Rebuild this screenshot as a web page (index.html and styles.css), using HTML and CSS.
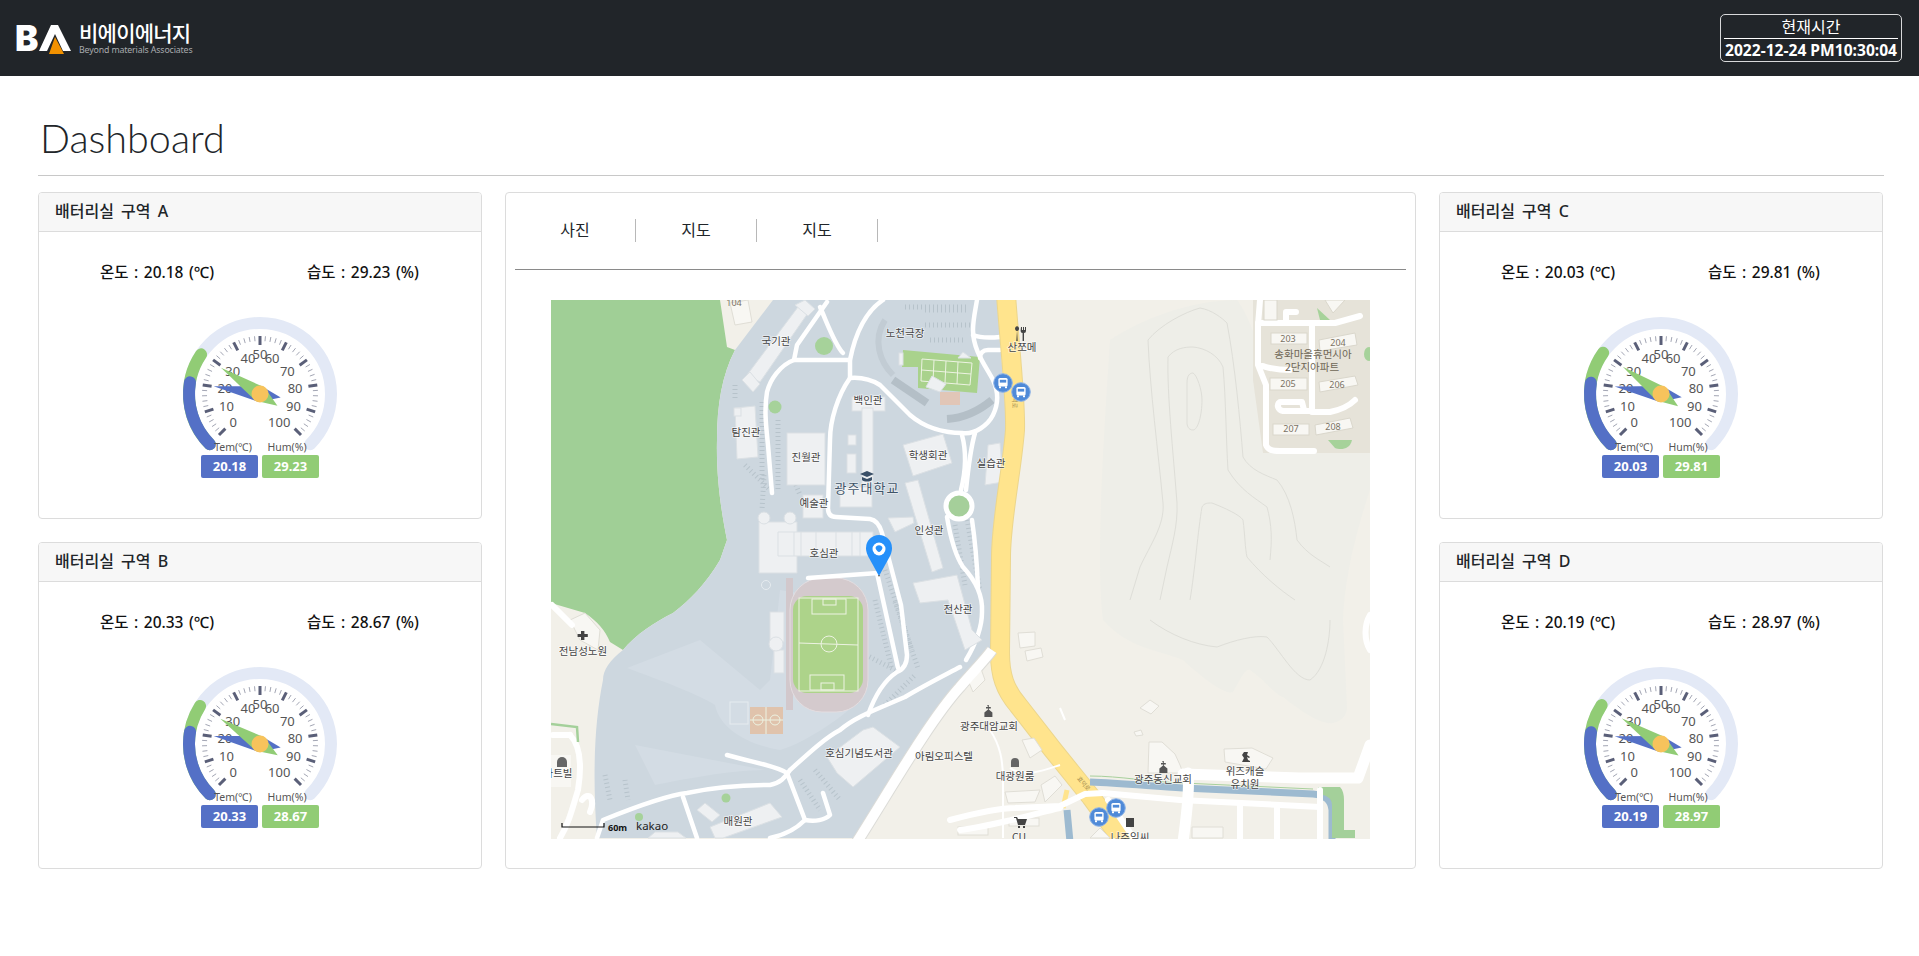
FILE: index.html
```html
<!DOCTYPE html>
<html lang="ko">
<head>
<meta charset="utf-8">
<title>Dashboard</title>
<link rel="stylesheet" href="styles.css">
</head>
<body>
<header class="topbar">
  <div class="logo">
    <div class="logo-mark">
      <span class="logo-b">B</span>
      <svg class="logo-a" viewBox="0 0 32 30" width="32" height="30"><polygon points="0,27 12,1 19,1 32,27 24,27 16,10 8,27" fill="#fff"/><polygon points="16,13 25,30 5,30 10,30" fill="#f29100"/></svg>
    </div>
    <div class="logo-text">
      <div class="logo-kr">비에이에너지</div>
      <div class="logo-en">Beyond materials Associates</div>
    </div>
  </div>
  <div class="clock">
    <div class="clock-title">현재시간</div>
    <div class="clock-time">2022-12-24 PM10:30:04</div>
  </div>
</header>

<main class="page">
  <h1 class="title">Dashboard</h1>
  <div class="board">
    <div class="col">
      <section class="card">
        <div class="card-head">배터리실 구역 A</div>
        <div class="card-body">
          <div class="readout"><span>온도 : 20.18 (℃)</span><span>습도 : 29.23 (%)</span></div>
          <div class="gauge" data-t="20.18" data-h="29.23"></div>
          <div class="badges"><span class="badge blue">20.18</span><span class="badge green">29.23</span></div>
        </div>
      </section>
      <section class="card">
        <div class="card-head">배터리실 구역 B</div>
        <div class="card-body">
          <div class="readout"><span>온도 : 20.33 (℃)</span><span>습도 : 28.67 (%)</span></div>
          <div class="gauge" data-t="20.33" data-h="28.67"></div>
          <div class="badges"><span class="badge blue">20.33</span><span class="badge green">28.67</span></div>
        </div>
      </section>
    </div>

    <section class="card center">
      <nav class="tabs"><a class="tab">사진</a><a class="tab">지도</a><a class="tab">지도</a></nav>
      <div class="map-wrap">
        <svg class="map" viewBox="551 300 819 539" width="819" height="539">
          <defs>
            <symbol id="bus" viewBox="-10 -10 20 20" overflow="visible">
              <circle r="9.3" fill="#4f8ad8" stroke="#8fb4e6" stroke-width="1"/>
              <rect x="-4.6" y="-5" width="9.2" height="8.6" rx="1.5" fill="#fff"/>
              <rect x="-3.2" y="-3.2" width="6.4" height="2.8" fill="#4f8ad8"/>
              <rect x="-4" y="3.4" width="2" height="1.8" fill="#fff"/><rect x="2" y="3.4" width="2" height="1.8" fill="#fff"/>
            </symbol>
            <symbol id="church" viewBox="-6 -8 12 16" overflow="visible">
              <path d="M-.8,-7h1.6v2h2v1.4h-2v1.2l3.6,3V5h-8V.6l3.6-3V-3.6h-2V-5h2z" fill="#555"/>
            </symbol>
          </defs>
          <rect class="m-base" x="551" y="300" width="819" height="539"/>

          <!-- hill -->
          <path class="m-hill" d="M1237,300 C1190,300 1140,320 1110,340 C1105,420 1095,560 1103,620 C1130,650 1160,650 1183,660 C1205,680 1225,695 1233,692 C1240,680 1245,668 1250,670 C1265,680 1275,695 1283,697 C1300,710 1320,725 1333,723 C1345,720 1347,712 1347,707 L1343,620 C1345,570 1360,520 1370,490 L1370,453 L1287,453 C1270,400 1260,330 1237,300 Z"/>
          <path class="m-contour" d="M1130,600 L1140,567 C1150,545 1165,525 1163,503 C1158,450 1150,390 1148,340 C1160,325 1185,312 1200,308 C1212,310 1222,318 1227,323 C1235,365 1240,420 1243,457 C1250,470 1265,475 1277,480 C1290,495 1295,520 1297,540 C1308,555 1320,560 1330,567"/>
          <path class="m-contour" d="M1160,600 L1167,567 C1172,545 1178,525 1177,503 C1173,450 1167,395 1168,357 C1175,348 1185,347 1193,347 C1205,348 1218,355 1223,367 C1226,400 1226,440 1228,470 C1240,490 1255,498 1267,507 C1272,525 1272,540 1270,560"/>
          <path class="m-contour" d="M1187,383 C1187,375 1190,373 1193,373 C1197,375 1202,390 1202,400 C1202,415 1198,430 1193,430 C1188,430 1187,425 1187,423 Z"/>
          <path class="m-contour" d="M1190,600 C1195,570 1198,530 1202,507 C1204,503 1208,503 1212,503 C1225,508 1240,515 1243,520 C1245,535 1245,548 1247,557 C1262,575 1280,590 1295,600"/>
          <path class="m-contour" d="M1150,620 C1170,635 1195,645 1217,647 C1235,640 1255,635 1267,637 C1280,650 1295,680 1310,680 C1325,670 1330,640 1330,620"/>

          <!-- forest -->
          <path class="m-green" d="M551,300 H720 L727,347 L735,350 C722,375 717,405 717,440 C716,480 722,515 727,540 L720,560 C705,585 690,600 673,613 C655,622 635,635 623,650 L610,642 C605,630 598,622 585,613 L551,603 Z"/>

          <!-- campus -->
          <path class="m-campus" d="M773,300 L735,350 C722,375 717,405 717,440 C716,480 722,515 727,540 L720,560 C705,585 690,600 673,613 C655,622 635,635 623,650 C610,660 603,670 603,680 C595,720 592,770 597,838 H857 L960,690 L992,650 L992,557 L1007,430 L997,300 Z"/>
          <path class="m-campus2" d="M627,668 C660,680 700,695 715,705 C720,730 750,745 780,750 C800,745 840,720 860,700 L840,600 L780,590 L770,680 L760,690 L700,640 Z M765,770 C730,770 680,780 655,785 L635,745 Z"/>

          <!-- stands and parking -->
          <path class="m-stand" d="M893,380 L927,403"/>
          <path class="m-stand" d="M947,419 C965,418 980,410 992,400"/>
          <path class="m-arc" d="M885,320 C872,340 880,362 893,375"/>
          <path class="m-park" d="M905,307 H968"/><path class="m-park" d="M925,310 H967"/><path class="m-park" d="M925,325 H970"/><path class="m-park" d="M930,340 H963"/>
          <path class="m-park" d="M735,385 V400"/><path class="m-park" d="M762,402 V480"/><path class="m-park" d="M778,420 V490"/><path class="m-park" d="M745,465 L770,490"/>
          <path class="m-park" d="M764,475 L762,510"/><path class="m-park" d="M790,470 L800,495"/><path class="m-park" d="M885,570 L912,650"/><path class="m-park" d="M875,600 L892,670"/><path class="m-park" d="M895,602 L918,668"/><path class="m-park" d="M866,655 L895,670"/>
          <path class="m-park" d="M955,525 L965,585"/><path class="m-park" d="M967,520 L980,590"/>
          <path class="m-park" d="M800,780 L820,810"/><path class="m-park" d="M815,770 L840,800"/><path class="m-park" d="M605,775 L610,800"/><path class="m-park" d="M625,780 L628,800"/>
          <path class="m-park" d="M885,705 L915,675"/>

          <!-- fields -->
          <polygon class="m-field" points="903,350 980,357 977,393 918,388 918,367 902,367"/>
          <g class="m-line"><path d="M922,359 L972,363 L970,385 L921,381 Z M934,360 L933,382 M946,361 L945,383 M958,362 L957,384 M922,370 L971,374"/></g>
          <rect class="m-court" x="940" y="392" width="20" height="13"/>

          <!-- stadium -->
          <rect class="m-lane" x="786" y="578" width="7" height="132"/>
          <rect class="m-track" x="790" y="578" width="78" height="134" rx="32"/>
          <rect class="m-pitch" x="793" y="596" width="70" height="97" rx="14"/>
          <g class="m-line"><rect x="799" y="598" width="59" height="93"/><path d="M799,643 L858,645"/><circle cx="829" cy="644" r="8"/><rect x="812" y="599" width="34" height="15"/><rect x="823" y="599" width="13" height="6"/><rect x="810" y="675" width="34" height="15"/><rect x="821" y="683" width="13" height="7"/></g>
          <rect class="m-court2" x="750" y="707" width="33" height="27"/>
          <g class="m-line"><path d="M766,707 V734 M750,720 H783"/><circle cx="758" cy="720" r="5"/><circle cx="775" cy="720" r="5"/></g>
          <rect class="m-outline" x="730" y="702" width="18" height="22"/>
          <circle class="m-outline" cx="766" cy="585" r="4.500"/>

          <!-- white roads campus -->
          <g class="m-road">
            <path d="M827,302 L797,345 L794,360 C780,365 770,380 767,392 C764,410 766,425 768,445 L772,493"/>
            <path d="M883,300 C865,312 855,335 850,360 L850,378 C838,395 830,420 830,440 L828,508 C828,514 831,517 836,517 L870,519 C877,520 880,526 882,533 L901,605 L907,655 C907,665 902,670 897,672 C885,680 875,695 868,715"/>
            <path d="M877,573 L898,668"/>
            <path d="M808,578 L878,573"/>
            <path d="M794,360 H850"/>
            <path d="M820,307 C828,325 835,345 843,353"/>
            <path d="M850,378 C862,377 872,380 880,385 C890,395 900,405 910,415 C925,428 945,433 962,433 C975,435 988,425 993,415 C998,405 999,393 993,380 C985,365 973,350 973,330 C973,320 975,312 977,300"/>
            <path d="M973,335 C980,338 990,338 1000,337"/>
            <path d="M1000,350 L988,350 C983,350 980,353 980,358"/>
            <path d="M962,435 C966,450 966,470 961,490"/><path d="M975,433 C970,450 968,470 966,490"/>
            <path d="M947,517 C950,535 955,555 963,567 C975,580 983,595 982,612 C982,630 975,645 966,660"/>
            <path d="M972,520 C975,540 977,565 978,587"/>
          </g>
          <circle cx="959" cy="506" r="13" class="m-circle"/>
          <circle class="m-tree" cx="824" cy="346" r="9"/>
          <circle class="m-tree" cx="775" cy="407" r="6.500"/>
          <circle class="m-tree" cx="726" cy="798" r="4.500"/>
          <circle class="m-tree" cx="639" cy="817" r="4"/>

          <g class="m-road">
            <path d="M597,838 L603,820 C640,805 670,795 687,793 C720,786 750,785 770,785 C780,783 785,778 790,770 C810,752 825,738 840,730 C855,717 875,710 905,697 C925,685 945,675 960,667"/>
            <path d="M727,755 C750,762 775,765 787,773 L805,820 C815,822 825,820 830,815 L823,793"/>
            <path d="M805,820 C795,830 785,835 770,838"/>
            <path d="M683,797 L697,838"/>
          </g>

          <!-- buildings campus -->
          <g class="m-bld">
            <polygon points="747,375 798,307 808,313 760,382"/>
            <polygon points="742,380 750,372 760,384 753,392"/>
            <polygon points="795,305 805,300 815,309 808,316"/>
            <polygon points="735,408 755,406 758,457 737,459"/>
            <rect x="734" y="408" width="7" height="8"/>
            <rect x="787" y="433" width="38" height="52"/>
            <rect x="852" y="397" width="33" height="14"/>
            <rect x="862" y="408" width="11" height="76"/>
            <rect x="848" y="435" width="8" height="10"/>
            <rect x="847" y="454" width="9" height="19"/>
            <rect x="840" y="487" width="32" height="20"/>
            <rect x="803" y="495" width="20" height="23"/>
            <polygon points="903,445 943,434 952,463 913,476"/>
            <polygon points="905,483 918,480 943,568 932,572"/>
            <polygon points="888,518 913,517 914,523 895,532"/>
            <polygon points="988,445 1000,443 1003,482 985,485"/>
            <path d="M759,522 H797 V573 H759 Z"/>
            <circle cx="764" cy="518" r="6"/><circle cx="790" cy="518" r="6"/>
            <path d="M778,532 H873 V556 H778 Z"/>
            <path d="M794,532 V556 M801,532 V556 M816,532 V556 M836,532 V556 M852,532 V556 M860,532 V556"/>
            <polygon points="913,583 957,575 972,630 982,640 965,650 948,600 920,603"/>
            <rect x="770" y="612" width="14" height="30"/><rect x="774" y="650" width="10" height="23"/><circle cx="776" cy="644" r="7"/>
            <polygon points="827,757 863,730 873,727 900,747 853,787 837,773"/>
            <polygon points="710,827 770,803 782,817 723,838 715,838"/>
            <polygon points="697,810 705,803 720,815 712,822"/>
            <polygon points="648,838 655,832 678,832 686,838"/>
            <polygon points="926,387 932,376 946,384 940,392"/>
            <polygon points="958,358 963,352 971,358"/>
            <rect x="899" y="353" width="4" height="12"/>
          </g>
          <polygon class="m-bld2" points="730,303 748,300 752,322 735,325"/>

          <!-- yellow road -->
          <path class="m-yellow-b" d="M1006,295 C1010,350 1016,400 1015,430 C1012,470 1001,520 1001,557 L1000,653 C1000,675 1005,690 1018,705 L1053,750 L1091,797 L1126,845"/>
          <path class="m-yellow" d="M1006,295 C1010,350 1016,400 1015,430 C1012,470 1001,520 1001,557 L1000,653 C1000,675 1005,690 1018,705 L1053,750 L1091,797 L1126,845"/>
          <text class="t-road" transform="translate(1013,400) rotate(90)">효덕로</text>
          <text class="t-road" transform="translate(1082,785) rotate(50)">효덕로</text>
          <g class="m-wide"><path d="M857,842 C890,790 930,720 960,687 C970,675 985,660 992,650"/></g>
          <path class="m-yellow-b2" d="M1067,790 L1063,808"/>

          <!-- scattered beige buildings -->
          <g class="m-bld2">
            <polygon points="1018,633 1035,632 1035,646 1020,648"/><polygon points="1025,651 1041,648 1043,657 1027,661"/>
            <polygon points="1140,708 1150,700 1159,706 1151,714"/>
            <polygon points="1134,732 1141,730 1143,735 1136,736"/>
            <polygon points="1149,742 1162,742 1175,754 1180,765 1183,773 1148,773"/>
            <polygon points="1224,749 1252,748 1273,758 1266,769 1225,762"/>
            <polygon points="967,678 980,666 985,680 973,692"/>
            <polygon points="1022,740 1034,738 1042,750 1030,758"/>
            <polygon points="1041,785 1055,776 1062,785 1045,802"/>
            <polygon points="1005,792 1040,790 1035,802 1008,803"/>
            <rect x="1009" y="818" width="30" height="8"/>
            <rect x="958" y="827" width="30" height="8"/>
            <polygon points="600,630 585,613 570,620 580,640 598,650"/>
            <polygon points="1192,827 1223,827 1223,838 1192,838"/>
            <polygon points="1090,838 1100,828 1110,838"/>
          </g>

          <!-- apartments -->
          <path class="m-apt" d="M1253,300 H1370 V453 H1263 L1253,380 Z"/>
          <path class="m-tree" d="M1317,308 L1320,320 H1330 Z"/>
          <path class="m-tree" d="M1328,440 H1352 C1350,450 1340,450 1335,448 Z"/>
          <ellipse class="m-tree" cx="1369" cy="354" rx="5" ry="7"/>
          <g class="m-road thin">
            <path d="M1260,300 L1258,325 V365 L1266,385 V445 C1268,450 1272,451 1280,451 H1314"/>
            <path d="M1258,323 H1335 L1360,316"/>
            <path d="M1286,322 V312 H1296"/>
            <path d="M1312,325 V410"/>
            <path d="M1262,366 C1270,368 1275,370 1290,370"/>
            <path d="M1312,412 H1330 C1340,410 1350,405 1355,400"/>
            <path d="M1312,411 H1283 C1278,410 1276,405 1280,402 H1302 L1304,410"/>
          </g>
          <g class="m-bld3">
            <rect x="1271" y="333" width="36" height="11"/><polygon points="1319,340 1355,333 1357,345 1320,351"/>
            <rect x="1270" y="378" width="37" height="12"/><polygon points="1319,382 1355,376 1358,385 1320,392"/>
            <rect x="1273" y="424" width="36" height="11"/><polygon points="1315,425 1350,418 1353,428 1316,435"/>
            <rect x="1264" y="300" width="13" height="20"/>
            <polygon points="1325,300 1345,300 1333,313"/>
          </g>

          <!-- lower right -->
          <g class="m-water"><path d="M1090,782 C1120,783 1150,786 1183,788 L1313,794 C1325,795 1331,800 1332,810 V842"/><path d="M1067,810 L1070,842"/></g>
          <path class="m-waterline" d="M1090,776 C1120,776 1150,782 1183,783 L1313,789"/>
          <path class="m-greenblock" d="M1318,787 H1340 C1343,790 1344,795 1344,800 V830 H1355 V838 H1332 V805 C1332,797 1325,795 1318,794 Z"/>
          <g class="m-road wide">
            <path d="M1183,774 L1300,778 L1358,778 L1370,745"/>
            <path d="M1188,773 C1190,790 1186,820 1183,842"/>
          </g>
          <g class="m-road mid">
            <path d="M1103,793 L1180,800 L1320,807"/>
            <path d="M950,820 C980,812 1000,808 1015,808 L1060,806 L1085,794 L1103,793"/>
            <path d="M1320,790 V840"/>
            <path d="M1240,805 V840"/><path d="M1277,805 V840"/>
            <path d="M1108,800 L1135,840"/>
          </g>
          <path class="m-thin" d="M990,730 C1000,745 1003,760 1003,780 V838"/>
          <path class="m-thin" d="M1010,768 C1025,778 1045,770 1060,765"/>
          <path class="m-thin" d="M1060,708 L1065,720"/>
          <g class="m-road mid">
            <path d="M552,605 L572,625"/>
            <path d="M570,735 C580,745 582,765 578,790 C572,810 568,825 560,838"/>
            <path d="M553,735 H570"/>
            <path d="M582,800 C590,790 595,800 590,812"/>
            <path d="M960,830 C1000,825 1040,812 1060,808"/>
          </g>
          <path class="m-wide2" d="M857,842 C890,790 930,720 960,687 C970,675 985,660 992,650"/>
          <path class="m-greenline" d="M551,724 L577,727 L578,742"/>
          <rect class="m-bld2a" x="551" y="755" width="20" height="32"/>
          <path class="m-road mid" d="M1370,615 C1364,625 1364,640 1370,650"/>

          <!-- icons -->
          <path class="i-dark" d="M1017,331 a2,2.4 0 1 1 .1,0 l.6,10 h-1.4 z"/>
          <path class="i-dark" d="M1021,327 h1 v3 h1 v-3 h1 v3 h1 v-3 h1 v4 a2,2 0 0 1 -2,2 v8 h-1.4 v-8 a2,2 0 0 1 -2,-2z"/>
          <path class="i-navy" d="M860,474 L867,471 L874,474 L867,477 Z M862,477 L867,479 L872,477 V480 C870,482 864,482 862,480 Z"/>
          <path class="i-dark" d="M581,631 h3.400 v3 h3.400 v3 h-3.400 v3 h-3.400 v-3 h-3.400 v-3 h3.400 z"/>
          <path class="i-gray" d="M557,762 a5,5 0 0 1 10,0 v5 h-10 z"/>
          <path class="i-gray" d="M1011,762 a4,4 0 0 1 8,0 v5 h-8 z"/>
          <use href="#church" x="982" y="704" width="12" height="16"/>
          <use href="#church" x="1157" y="760" width="12" height="16"/>
          <path class="i-dark" d="M1244,752 l4,0 -1,3 3,2 -1,1 -2,-1 1,3 2,1 0,1 h-8 l2,-4 -2,-3 z"/>
          <path class="i-dark" d="M1014,817 h3 l1,2 h9 l-2,6 h-7 l-2,-7 h-2 z M1018,826 h2 v2 h-2 z M1023,826 h2 v2 h-2 z"/>
          <path class="i-dark" d="M1126,818 h8 v9 h-8 z"/>

          <!-- labels -->
          <g class="t-map">
            <text x="776" y="345">국기관</text>
            <text x="905" y="337">노천극장</text>
            <text x="868" y="404">백인관</text>
            <text x="746" y="436">탐진관</text>
            <text x="806" y="461">진월관</text>
            <text x="928" y="459">학생회관</text>
            <text x="991" y="467">실습관</text>
            <text x="814" y="507">예술관</text>
            <text x="929" y="534">인성관</text>
            <text x="824" y="557">호심관</text>
            <text x="958" y="613">전산관</text>
            <text x="583" y="655">전남성노원</text>
            <text x="558" y="777">아트빌</text>
            <text x="859" y="757">호심기념도서관</text>
            <text x="944" y="760">아림오피스텔</text>
            <text x="738" y="825">매원관</text>
            <text x="989" y="730">광주대암교회</text>
            <text x="1015" y="780">대광원룸</text>
            <text x="1163" y="783">광주동신교회</text>
            <text x="1245" y="775">위즈캐슬</text>
            <text x="1245" y="788">유치원</text>
            <text x="1019" y="841">CU</text>
            <text x="1130" y="841">나주임씨</text>
            <text x="1022" y="351">산쪼메</text>
          </g>
          <text class="t-uni" x="867" y="493">광주대학교</text>
          <g class="t-apt">
            <text x="1313" y="358">송화마을휴먼시아</text>
            <text x="1312" y="371">2단지아파트</text>
          </g>
          <g class="t-num">
            <text x="1288" y="342">203</text><text x="1338" y="346">204</text>
            <text x="1288" y="387">205</text><text x="1337" y="388">206</text>
            <text x="1291" y="432">207</text><text x="1333" y="430">208</text>
            <text x="734" y="306">104</text>
          </g>

          <use href="#bus" x="993" y="373" width="20" height="20"/>
          <use href="#bus" x="1011" y="382" width="20" height="20"/>
          <use href="#bus" x="1106" y="798" width="20" height="20"/>
          <use href="#bus" x="1089" y="807" width="20" height="20"/>

          <!-- marker -->
          <path class="i-pin" d="M879,576 L868.500,557 C866,552 866,549 866,548 A13,13 0 0 1 892,548 C892,549 892,552 889.500,557 Z"/>
          <circle cx="879" cy="549" r="6.500" fill="#fff"/>
          <path class="i-pin" d="M875.500,548 A3.600,3.600 0 0 1 882.500,548 C882,550 880,552 879,552 C878,552 876,550 875.500,548 Z"/>
          <path class="i-tip" d="M878,575 h2 l-1,2 z"/>

          <!-- scale -->
          <path class="i-scale" d="M562,823 V827 H604 V823"/>
          <text class="t-scale" x="608" y="831">60m</text>
          <text class="t-kakao" x="636" y="830">kakao</text>
        </svg>
      </div>
    </section>

    <div class="col">
      <section class="card">
        <div class="card-head">배터리실 구역 C</div>
        <div class="card-body">
          <div class="readout"><span>온도 : 20.03 (℃)</span><span>습도 : 29.81 (%)</span></div>
          <div class="gauge" data-t="20.03" data-h="29.81"></div>
          <div class="badges"><span class="badge blue">20.03</span><span class="badge green">29.81</span></div>
        </div>
      </section>
      <section class="card">
        <div class="card-head">배터리실 구역 D</div>
        <div class="card-body">
          <div class="readout"><span>온도 : 20.19 (℃)</span><span>습도 : 28.97 (%)</span></div>
          <div class="gauge" data-t="20.19" data-h="28.97"></div>
          <div class="badges"><span class="badge blue">20.19</span><span class="badge green">28.97</span></div>
        </div>
      </section>
    </div>
  </div>
</main>
<script src="gauge.js"></script>
</body>
</html>
```

FILE: styles.css
```css
* { box-sizing: border-box; }
html, body { margin: 0; padding: 0; }
body {
  font-family: "Noto Sans", "Noto Sans CJK KR", sans-serif;
  color: #212529;
  background: #fff;
  font-size: 14px;
}
.topbar {
  height: 76px;
  background: #212529;
  display: flex;
  align-items: center;
  justify-content: space-between;
  padding: 0 17px 0 15px;
}
.logo { display: flex; align-items: flex-start; gap: 8px; }
.logo-mark { display: flex; align-items: flex-start; height: 30px; margin-top: 2px; }
.logo-b { font: 900 35px/28px "Inter", "Liberation Sans", sans-serif; color: #fff; width: 25px; letter-spacing: -1px; }
.logo-a { display: block; margin-left: -1px; }
.logo-text { display: flex; flex-direction: column; width: 113px; }
.logo-kr { font: 500 21px/21px "Noto Sans CJK KR", sans-serif; color: #fff; letter-spacing: -.75px; white-space: nowrap; }
.logo-en { font: 400 8.800px/10px "Noto Sans", sans-serif; color: #a8abae; white-space: nowrap; margin-top: 2px; letter-spacing: -.15px; }
.clock {
  width: 182px;
  height: 48px;
  border: 1px solid #d8d9da;
  border-radius: 5px;
  color: #fff;
  text-align: center;
  padding: 0 3px;
}
.clock-title { font: 400 16px/22px "Noto Sans CJK KR", sans-serif; border-bottom: 1px solid #fff; height: 24px; }
.clock-time { font: 700 15.600px/22px "Noto Sans", sans-serif; white-space: nowrap; margin: 0 -2px; }

.page { padding: 0 35px 0 38px; }
.title {
  margin: 0;
  padding: 38px 0 0 2px;
  height: 100px;
  font: 300 39.500px/48px "Lato", sans-serif;
  border-bottom: 1px solid #c8c8c8;
  color: #212529;
}
.board {
  display: grid;
  grid-template-columns: 444px 911px 444px;
  column-gap: 23px;
  margin-top: 16px;
  height: 677px;
}
.col { display: flex; flex-direction: column; gap: 23px; }
.card {
  border: 1px solid #dcdcdc;
  border-radius: 4px;
  background: #fff;
  flex: 1;
  overflow: hidden;
}
.card-head {
  height: 39px;
  padding: 0 16px;
  background: #f7f7f7;
  border-bottom: 1px solid #dcdcdc;
  font: 500 16px/37px "Noto Sans", "Noto Sans CJK KR", sans-serif;
  word-spacing: 3px;
  color: #212529;
}
.card-body { display: flex; flex-direction: column; align-items: center; padding-top: 30px; }
.readout {
  display: grid;
  grid-template-columns: 207px 113px;
  width: 320px;
  height: 21px;
  font: 500 15.500px/21px "Noto Sans", "Noto Sans CJK KR", sans-serif;
  word-spacing: 1.500px;
  color: #111;
  white-space: nowrap;
}
.gauge { width: 200px; height: 145px; margin-top: 27px; }
.gauge svg { display: block; }
.badges { display: flex; gap: 4px; }
.badge {
  width: 57px;
  height: 23px;
  border-radius: 2px;
  color: #fff;
  font: 700 13px/23px "Noto Sans", sans-serif;
  text-align: center;
}
.blue { background: #5470c6; }
.green { background: #91cc75; }
.g-track { fill: none; stroke: #e3e9f6; stroke-width: 12; stroke-linecap: round; }
.g-hum { fill: none; stroke: #91cc75; stroke-width: 12; stroke-linecap: round; }
.g-tem { fill: none; stroke: #5470c6; stroke-width: 12; stroke-linecap: round; }
.g-major { stroke: #5a5f78; stroke-width: 3; }
.g-minor { stroke: #a3a6b4; stroke-width: 1; }
.g-label { font: 400 13px "Noto Sans", sans-serif; fill: #555; dominant-baseline: central; }
.g-name { font: 400 10.500px "Noto Sans", sans-serif; fill: #555; text-anchor: middle; dominant-baseline: central; }
.g-hub { fill: #f7c35c; }

.center { display: flex; flex-direction: column; padding: 0 9px; }
.tabs {
  display: flex;
  height: 77px;
  padding-top: 26px;
  margin-bottom: 30px;
  align-items: flex-start;
  border-bottom: 1px solid #8a8a8a;
}
.tab {
  width: 121px;
  height: 23px;
  border-right: 1px solid #b8b8b8;
  text-align: center;
  font: 400 16px/21px "Noto Sans CJK KR", sans-serif;
  color: #212529;
}
.map-wrap { display: flex; justify-content: center; }
.map { display: block; overflow: hidden; }

.m-base { fill: #f2f0e9; }
.m-hill { fill: #eeeee8; }
.m-contour { fill: none; stroke: #deded8; stroke-width: 1; }
.m-green { fill: #a0cf96; }
.m-campus { fill: #cdd7df; }
.m-campus2 { fill: #d3dce4; }
.m-stand { fill: none; stroke: #b4bfc7; stroke-width: 8; }
.m-arc { fill: none; stroke: #c2ccd4; stroke-width: 6; }
.m-park { fill: none; stroke: #b7c3cb; stroke-width: 5; stroke-dasharray: 1 3; }
.m-field { fill: #a9d28c; }
.m-line { fill: none; stroke: #edf3e2; stroke-width: 1; }
.m-court { fill: #e1c6b7; }
.m-court2 { fill: #e0c3ac; }
.m-lane { fill: #d2c8cc; }
.m-track { fill: #d4cacd; stroke: #e4dde0; stroke-width: 1; }
.m-pitch { fill: #add38a; }
.m-outline { fill: none; stroke: #e6ebef; stroke-width: 1; }
.m-road { fill: none; stroke: #fff; stroke-width: 4.500; stroke-linecap: round; stroke-linejoin: round; }
.m-road.thin { stroke-width: 6; }
.m-road.mid { stroke-width: 6; }
.m-road.wide { stroke-width: 11; }
.m-circle { fill: #a5cf9a; stroke: #fff; stroke-width: 5; }
.m-bld { fill: #eef0f2; stroke: #dbe0e4; stroke-width: 1; }
.m-yellow-b { fill: none; stroke: #ecd68d; stroke-width: 20; }
.m-yellow-b2 { fill: none; stroke: #ffe48d; stroke-width: 5; }
.m-yellow { fill: none; stroke: #ffe48d; stroke-width: 18; }
.m-wide { fill: none; stroke: #dcdcd8; stroke-width: 12; }
.m-wide2 { fill: none; stroke: #fff; stroke-width: 10; }
.m-bld2 { fill: #f8f7f3; stroke: #e0ded6; stroke-width: 1; }
.m-bld2a { fill: #f8f7f3; }
.m-apt { fill: #e6e3d9; }
.m-tree { fill: #a6d29a; }
.m-bld3 { fill: #f8f7f3; stroke: #dad7cc; stroke-width: 1; }
.m-water { fill: none; stroke: #9dbad0; stroke-width: 7; }
.m-waterline { fill: none; stroke: #a8d09c; stroke-width: 1; }
.m-greenblock { fill: #a4d09a; }
.m-thin { fill: none; stroke: #fff; stroke-width: 2; }
.m-greenline { fill: none; stroke: #a4d09a; stroke-width: 2.500; }
.i-dark { fill: #444; }
.i-gray { fill: #666; }
.i-navy { fill: #3a5068; }
.i-pin { fill: #2590fa; }
.i-tip { fill: #555; }
.i-scale { fill: none; stroke: #111; stroke-width: 1.200; }
.t-map text {
  font: 400 10.500px "Noto Sans CJK KR", sans-serif;
  fill: #444;
  text-anchor: middle;
  paint-order: stroke;
  stroke: #fff;
  stroke-width: 1.500px;
  stroke-opacity: .6;
}
.t-uni { font: 400 13px "Noto Sans CJK KR", sans-serif; fill: #3f5468; text-anchor: middle; letter-spacing: 1px; paint-order: stroke; stroke: #fff; stroke-width: 1.500px; stroke-opacity: .5; }
.t-apt text { font: 400 10.500px "Noto Sans CJK KR", sans-serif; fill: #6e6656; text-anchor: middle; }
.t-num text { font: 400 9px "Noto Sans", sans-serif; fill: #7a7264; text-anchor: middle; }
.t-road { font: 400 6px "Noto Sans CJK KR", sans-serif; fill: #a58e4f; text-anchor: middle; }
.t-scale { font: 700 9px "Noto Sans", sans-serif; fill: #111; }
.t-kakao { font: 400 11.500px "Noto Sans", sans-serif; fill: #222; }
```

FILE: gauge.js
```js
(function () {
  var NS = 'http://www.w3.org/2000/svg';
  var R = 71, START = -135, SWEEP = 270;

  function el(name, attrs, parent, text) {
    var n = document.createElementNS(NS, name);
    for (var k in attrs) n.setAttribute(k, attrs[k]);
    if (text !== undefined) n.textContent = text;
    parent.appendChild(n);
    return n;
  }
  function pt(r, deg) {
    var a = deg * Math.PI / 180;
    return [(r * Math.sin(a)).toFixed(2), (-r * Math.cos(a)).toFixed(2)];
  }
  function arc(value) {
    var end = START + SWEEP * value / 100;
    var a = pt(R, START), b = pt(R, end);
    var large = end - START > 180 ? 1 : 0;
    return 'M' + a[0] + ',' + a[1] + ' A' + R + ',' + R + ' 0 ' + large + ' 1 ' + b[0] + ',' + b[1];
  }
  function needle(svg, value, color) {
    el('polygon', {
      points: '0,-47 8,0 0,21 -8,0',
      fill: color,
      transform: 'rotate(' + (START + SWEEP * value / 100).toFixed(2) + ')'
    }, svg);
  }

  document.querySelectorAll('.gauge').forEach(function (box) {
    var t = parseFloat(box.dataset.t), h = parseFloat(box.dataset.h);
    var svg = el('svg', { viewBox: '-100 -84 200 145', width: 200, height: 145 }, box);

    el('path', { d: arc(100), class: 'g-track' }, svg);
    el('path', { d: arc(h), class: 'g-hum' }, svg);
    el('path', { d: arc(t), class: 'g-tem' }, svg);

    for (var i = 0; i <= 50; i++) {
      var deg = START + SWEEP * i / 50;
      var major = i % 5 === 0;
      var a = pt(58, deg), b = pt(major ? 49 : 53, deg);
      el('line', { x1: a[0], y1: a[1], x2: b[0], y2: b[1], class: major ? 'g-major' : 'g-minor' }, svg);
    }
    for (var v = 0; v <= 100; v += 10) {
      var d = START + SWEEP * v / 100;
      var x = 43 * Math.sin(d * Math.PI / 180);
      var y = -40 * Math.cos(d * Math.PI / 180);
      var anchor = v === 50 ? 'middle' : (v < 50 ? 'start' : 'end');
      el('text', { x: x.toFixed(1), y: y.toFixed(1), 'text-anchor': anchor, class: 'g-label' }, svg, v);
    }

    needle(svg, t, '#5470c6');
    needle(svg, h, '#91cc75');
    el('circle', { r: 8.5, class: 'g-hub' }, svg);

    el('text', { x: -27, y: 53, class: 'g-name' }, svg, 'Tem(℃)');
    el('text', { x: 27, y: 53, class: 'g-name' }, svg, 'Hum(%)');
  });
})();
```
